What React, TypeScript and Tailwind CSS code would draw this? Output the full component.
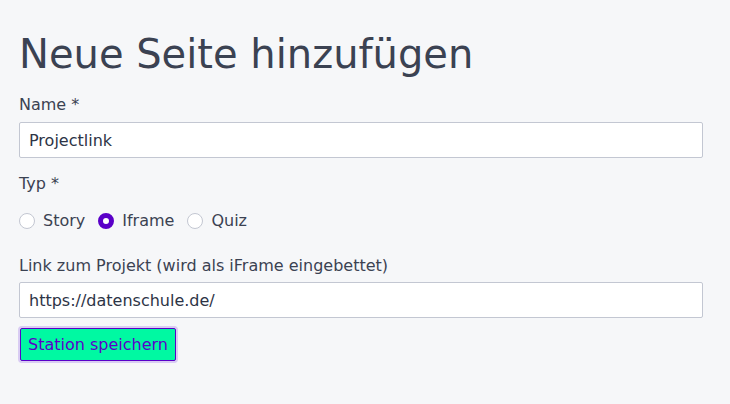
import { useState } from "react";

const typen = ["Story", "Iframe", "Quiz"];

export default function App() {
  const [name, setName] = useState("Projectlink");
  const [typ, setTyp] = useState("Iframe");
  const [link, setLink] = useState("https://datenschule.de/");

  return (
    <div
      className="min-h-[404px] bg-[#f6f7f9] pl-[19px] pr-[27px] pt-[30px] text-[#3b4252]"
      style={{ fontFamily: '"DejaVu Sans", sans-serif' }}
    >
      <h1 className="text-[40px] leading-[48px]">Neue Seite hinzufügen</h1>

      <label className="mt-[15px] block text-base leading-6">Name *</label>
      <input
        value={name}
        onChange={(e) => setName(e.target.value)}
        className="mt-[5px] block h-[36px] w-full rounded-[2px] border border-[#c3c7d2] bg-white px-[9px] text-base text-[#2d3446] outline-none"
      />

      <p className="mt-[14px] text-base leading-6">Typ *</p>
      <div className="mt-[13px] flex h-6 items-center">
        {typen.map((t) => (
          <label key={t} className="mr-[13px] flex cursor-pointer items-center gap-2 text-base">
            <span
              onClick={() => setTyp(t)}
              className={`block h-4 w-4 rounded-full ${
                typ === t
                  ? "border-[5px] border-[#5a00c8] bg-white"
                  : "border border-[#c3c7d2] bg-white"
              }`}
            />
            {t}
          </label>
        ))}
      </div>

      <label className="mt-[21px] block text-base leading-6">
        Link zum Projekt (wird als iFrame eingebettet)
      </label>
      <input
        value={link}
        onChange={(e) => setLink(e.target.value)}
        className="mt-[4px] block h-[36px] w-full rounded-[2px] border border-[#c3c7d2] bg-white px-[9px] text-base text-[#2d3446] outline-none"
      />

      <button className="mt-[10px] ml-px h-[33px] rounded-[2px] border border-[#5a00c8] bg-[#00f9a2] px-[7px] text-base text-[#5a00c8] ring-2 ring-[#d9ccf3]">
        Station speichern
      </button>
    </div>
  );
}
